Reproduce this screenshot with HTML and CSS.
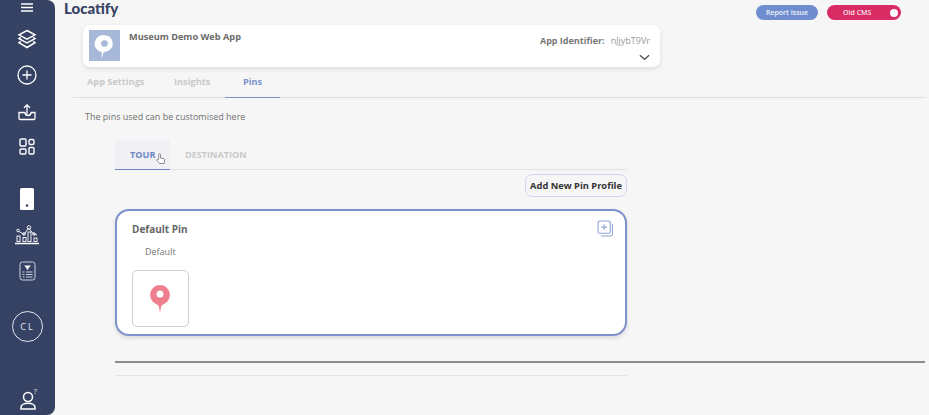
FILE: index.html
```html
<!DOCTYPE html>
<html lang="en">
<head>
<meta charset="utf-8">
<title>Locatify Pins</title>
<link rel="stylesheet" href="styles.css">
</head>
<body>
<div class="app">
  <nav class="side">
    <svg class="i i-menu" viewBox="0 0 12 9"><path d="M0 1h12M0 4.500h12M0 8h12"/></svg>
    <svg class="i i-layers" viewBox="0 0 20 20"><path d="M10 1.500l8 4.300-8 4.300-8-4.300z"/><path d="M3.800 8.400L2 9.700l8 4.300 8-4.300-1.800-1.300"/><path d="M3.800 12.300L2 13.600l8 4.900 8-4.900-1.800-1.300"/></svg>
    <svg class="i i-plus" viewBox="0 0 20 20"><circle cx="10" cy="10" r="9"/><path d="M10 5.500v9M5.500 10h9"/></svg>
    <svg class="i i-upload" viewBox="0 0 18 18"><path d="M9 11V2M6 4.800L9 1.800l3 3"/><path d="M1 9.500v5.700q0 1.300 1.300 1.300h13.400q1.300 0 1.300-1.300V9.500h-3.800q-.6 3-3.200 3-2.600 0-3.200-3z"/></svg>
    <svg class="i i-grid" viewBox="0 0 16 17"><rect x="1" y="1" width="6" height="7" rx="1"/><rect x="10" y="1.500" width="5" height="5" rx="1.500"/><rect x="1" y="11" width="6" height="5" rx="1.200"/><rect x="10" y="9.500" width="5" height="6.500" rx="1.200"/></svg>
    <svg class="i i-phone" viewBox="0 0 14 22"><rect width="14" height="22" rx="1.500" class="fill"/><circle cx="7" cy="17.500" r="1.300" class="hole"/></svg>
    <svg class="i i-chart" viewBox="0 0 26 20"><path d="M1 18.500h24" class="thick"/><path d="M5 6.500l5 3 4.500-6.500 5 6 3.500 1" class="thin"/><circle cx="4" cy="5.500" r="1.300" class="thin"/><circle cx="10" cy="9" r="1.300" class="thin"/><circle cx="15" cy="2.500" r="1.800" class="thin"/><circle cx="20" cy="9" r="1.300" class="thin"/><rect x="3" y="11" width="3" height="5.500" class="thin"/><rect x="9" y="12.500" width="3" height="4" class="thin"/><rect x="14" y="7" width="3" height="9.500" class="thin"/><rect x="20" y="13" width="3" height="3.500" class="thin"/></svg>
    <svg class="i i-form" viewBox="0 0 17 20"><rect x="1" y="1" width="15" height="18" rx="2.500"/><path d="M5 4.500h7l-2.500 2.500v1.500h-2V7z" class="fill"/><path d="M3.500 11h2M7 11h6.500M3.500 13.500h2M7 13.500h6.500M3.500 16h2M7 16h6.500"/></svg>
    <div class="avatar">CL</div>
    <div class="help">
      <svg class="i i-user" viewBox="0 0 16 19"><circle cx="8" cy="6" r="4.500"/><path d="M1 18v-1.500c0-2.500 3-4.200 7-4.200s7 1.700 7 4.200V18z"/></svg>
      <span class="q">?</span>
    </div>
  </nav>

  <main class="main">
    <header class="top">
      <div class="logo">Locatify</div>
      <div class="top-actions">
        <button class="report">Report Issue</button>
        <div class="cms"><span>Old CMS</span><i class="knob"></i></div>
      </div>
    </header>

    <section class="app-card">
      <div class="thumb">
        <svg viewBox="0 0 30 30"><path d="M15 5a8 8 0 0 1 4 14.900c-2 1-4.500 1.500-5 2.100l-2 6 .5-6.500A8 8 0 0 1 15 5z" class="pin"/><circle cx="15" cy="13" r="3.200" class="pin-eye"/></svg>
      </div>
      <div class="app-name">Museum Demo Web App</div>
      <div class="app-id">
        <div><b>App Identifier:</b><span>nJjybT9Vr</span></div>
        <svg class="chev" viewBox="0 0 12 7"><path d="M1 1l5 4.500L11 1"/></svg>
      </div>
    </section>

    <div class="tabs">
      <a class="tab">App Settings</a>
      <a class="tab">Insights</a>
      <a class="tab on">Pins</a>
    </div>

    <p class="intro">The pins used can be customised here</p>

    <div class="content">
      <div class="subtabs">
        <a class="subtab on">TOUR<svg class="hand" viewBox="0 0 10 13"><path d="M3 7V1.600a1 1 0 0 1 2 0V5.500l3.500.7q1 .3 1 1.300l-.5 4H4L1 8.200q-.5-1 .7-1.200z"/></svg></a>
        <a class="subtab">DESTINATION</a>
      </div>
      <div class="actions"><button class="add">Add New Pin Profile</button></div>
      <article class="pin-card">
        <h2>Default Pin</h2>
        <svg class="copy" viewBox="0 0 16 16"><rect x="1" y="1" width="11.500" height="11.500" rx="1.500"/><path d="M14.500 4v9.500a1.500 1.500 0 0 1-1.500 1.500H4M6.700 4v5.500M4 6.700h5.500"/></svg>
        <div class="label">Default</div>
        <div class="pin-box">
          <svg viewBox="0 0 20 28"><path d="M10 0a10 10 0 0 1 4 19.100c-1.500.7-2.500 1.500-3 3L10 28l-1-5.900c-.5-1.500-1.500-2.300-3-3A10 10 0 0 1 10 0z" class="red"/><circle cx="10" cy="9" r="3.500" class="white"/></svg>
        </div>
      </article>
    </div>
    <hr class="rule-dark">
    <hr class="rule-light">
  </main>
</div>
</body>
</html>
```
FILE: styles.css
```css
* { box-sizing: border-box; }
html, body { margin: 0; height: 100%; overflow: hidden; }
body { background: #f6f6f6; font-family: "Open Sans", sans-serif; color: #666; }
.app { display: flex; height: 415px; width: 929px; }

.side { width: 55px; height: 415px; flex: none; background: #354263; border-radius: 0 8px 8px 0; display: flex; flex-direction: column; align-items: center; padding-right: 1px; }
.i { display: block; fill: none; stroke: #fff; stroke-width: 1.500; }
.i .fill { fill: #fff; stroke: none; }
.i-menu { width: 12px; height: 9px; margin-top: 3px; stroke-width: 1.300; }
.i-layers { width: 20px; height: 20px; margin-top: 17px; stroke-width: 1.500; }
.i-plus { width: 20px; height: 20px; margin-top: 16px; stroke-width: 1.300; }
.i-upload { width: 18px; height: 18px; margin-top: 18px; stroke-width: 1.300; }
.i-grid { width: 16px; height: 17px; margin-top: 17px; stroke-width: 1.400; }
.i-phone { width: 14px; height: 22px; margin-top: 33px; stroke: none; }
.i-phone .hole { fill: #354263; }
.i-chart { width: 26px; height: 20px; margin-top: 15px; stroke-width: 1; }
.i-chart .thick { stroke-width: 1.500; }
.i-chart .thin { stroke-width: .9; }
.i-form { width: 17px; height: 20px; margin-top: 16px; stroke: #ccd2de; stroke-width: 1; }
.avatar { width: 31px; height: 31px; margin-top: 30px; border: 1.500px solid #e4e7ee; border-radius: 50%; display: flex; align-items: center; justify-content: center; color: #e4e7ee; font-size: 9px; letter-spacing: 2px; padding-left: 1px; }
.help { position: relative; margin-top: 49px; margin-left: 1px; }
.i-user { width: 16px; height: 19px; stroke-width: 1.500; }
.q { position: absolute; left: 14px; top: -5px; color: #dfe3ea; font-size: 8px; line-height: 10px; }

.main { flex: 1; min-width: 0; }
.top { height: 25px; display: flex; justify-content: space-between; padding: 5px 28px 0 9px; }
.logo { font-family: "Lato", sans-serif; font-weight: 900; font-size: 15px; line-height: 15px; margin-top: -4px; color: #354263; }
.top-actions { display: flex; gap: 9px; }
button { font-family: inherit; padding: 0; }
.report { width: 62px; height: 15px; border: 0; border-radius: 8px; background: #6f8ed0; color: #f0f3fa; font-size: 7px; font-weight: 600; }
.cms { width: 74px; height: 15px; border-radius: 8px; background: #d92c65; color: #fbe4ec; font-size: 7px; font-weight: 600; display: flex; align-items: center; justify-content: space-between; padding: 0 3px 0 16px; }
.knob { width: 8px; height: 8px; border-radius: 50%; background: #fff; }

.app-card { margin-left: 28px; width: 577px; height: 42px; background: #fff; border-radius: 7px; box-shadow: 0 2px 5px rgba(0,0,0,.1); display: flex; padding: 5px 10px 0 6px; }
.thumb { width: 31px; height: 31px; background: #a7b8d8; flex: none; }
.thumb svg { display: block; width: 31px; height: 31px; }
.thumb .pin { fill: #fff; }
.thumb .pin-eye { fill: #a7b8d8; }
.app-name { margin-left: 9px; font-size: 9.200px; font-weight: 700; line-height: 14px; color: #6b6b6b; }
.app-id { margin-left: auto; display: flex; flex-direction: column; align-items: flex-end; font-size: 9px; line-height: 12px; padding-top: 5px; }
.app-id b { font-weight: 700; color: #777; }
.app-id span { margin-left: 6px; font-size: 9px; color: #999; }
.chev { width: 11px; height: 7px; margin-top: 7px; fill: none; stroke: #555; stroke-width: 1.500; }

.tabs { margin: 0 4px 0 18px; height: 31px; border-bottom: 1px solid #dedede; display: flex; }
.tab { font-size: 9.200px; font-weight: 700; color: #c9c9c9; padding: 9px 0 0; line-height: 12px; height: 31px; }
.tab:nth-child(1) { margin-left: 14px; width: 87px; }
.tab:nth-child(2) { width: 51px; }
.tab.on { width: 55px; text-align: center; color: #7d92cc; border-bottom: 1px solid #7d92cc; }

.intro { margin: 13px 0 0 30px; font-size: 9px; line-height: 12px; color: #707070; }

.content { margin: 17px 0 0 60px; width: 512px; }
.subtabs { display: flex; height: 30px; border-bottom: 1px solid #e2e2e2; }
.subtab { font-size: 9.100px; font-weight: 700; color: #c9c9c9; line-height: 29px; padding: 0 15px; height: 30px; }
.subtab.on { position: relative; width: 55px; background: #f0f0f5; color: #6c86c6; border-bottom: 1.500px solid #6c86c6; }
.hand { position: absolute; left: 41px; top: 13px; width: 9px; height: 12px; fill: #fff; stroke: #666; stroke-width: .8; }
.actions { display: flex; justify-content: flex-end; margin-top: 4px; }
.add { width: 102px; height: 23px; background: #f6f6f6; border: 1px solid #cdd6ea; border-radius: 7px; color: #333; font-size: 9.300px; font-weight: 700; }
.pin-card { position: relative; margin-top: 12px; height: 127px; background: #fff; border: 2px solid #7d92cc; border-radius: 14px; box-shadow: 0 2px 4px rgba(0,0,0,.12); padding: 11px 15px; }
.pin-card h2 { margin: 0; font-size: 10px; line-height: 14px; font-weight: 700; color: #666; }
.copy { position: absolute; right: 11px; top: 9px; width: 17px; height: 17px; fill: none; stroke: #8fa3d4; stroke-width: 1; }
.label { margin: 10px 0 0 13px; font-size: 9px; line-height: 12px; color: #777; }
.pin-box { width: 57px; height: 57px; margin-top: 12px; padding-right: 2px; border: 1px solid #cfcfcf; border-radius: 5px; background: #fff; display: flex; align-items: center; justify-content: center; }
.pin-box svg { display: block; width: 20px; height: 28px; }
.red { fill: #ee7f8e; }
.white { fill: #fff; }

hr { border: 0; display: block; }
.rule-dark { margin: 25px 4px 0 60px; height: 2px; background: #8c8c8c; }
.rule-light { margin: 12px 0 0 60px; width: 512px; height: 1px; background: #e4e4e4; }
```
